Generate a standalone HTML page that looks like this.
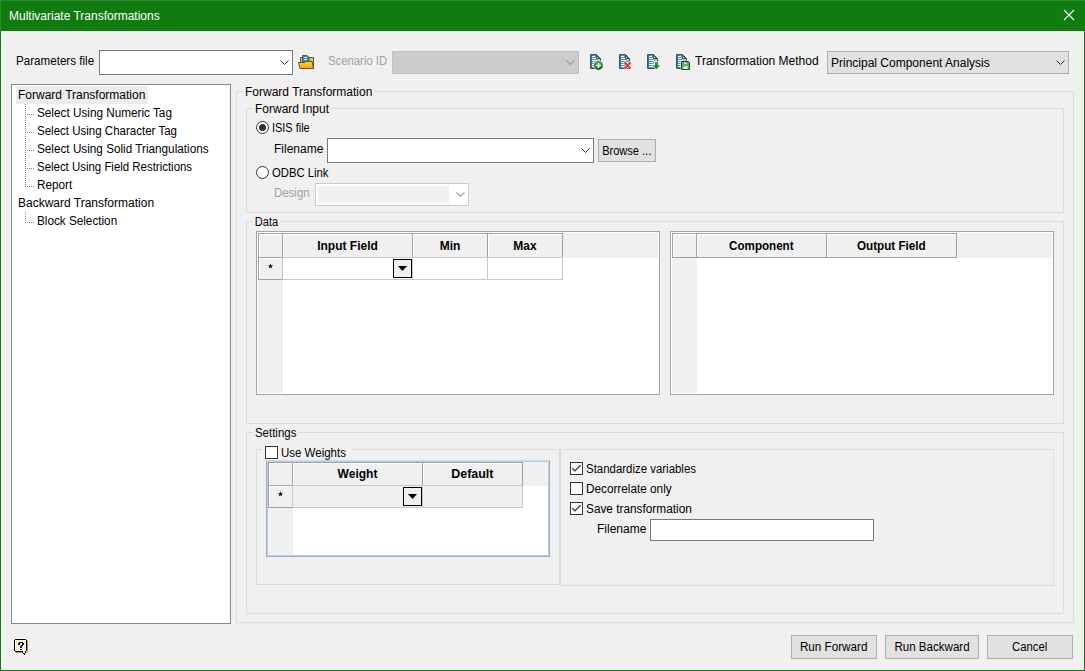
<!DOCTYPE html>
<html><head><meta charset="utf-8">
<style>
*{box-sizing:border-box}
html,body{margin:0;padding:0}
body{width:1085px;height:671px;overflow:hidden;position:relative;background:#107c10;font-family:"Liberation Sans",sans-serif;font-size:12px;color:#000}
.a{position:absolute}
.t{position:absolute;line-height:16px;white-space:nowrap}
.client{position:absolute;left:1px;top:31px;width:1083px;height:639px;background:#f0f0f0}
.frame{position:absolute;border:1px solid #dcdcdc}
.lbl{position:absolute;line-height:16px;white-space:nowrap;background:#f0f0f0;padding:0 2px}
.combo{position:absolute;background:#fff;border:1px solid #7a7a7a}
.chev{position:absolute;width:9px;height:6px}
.btn{position:absolute;background:#e1e1e1;border:1px solid #adadad;text-align:center;line-height:20px}
.grid{position:absolute;background:#fff;border:1px solid #a3a5ad}
.hc{position:absolute;border:1px solid #a0a0a0;background:#f0f0f0;font-weight:bold;text-align:center;line-height:24px;box-shadow:inset 1px 1px 0 #fff}
.rc{position:absolute;border:1px solid #c8c8c8;background:#fff}
.cb{position:absolute;width:13px;height:13px;border:1px solid #333;background:#fff}
.dis{color:#a0a0a0}
</style></head><body>
<!-- title bar -->
<div class="t" style="left:9px;top:8px;color:#fff">Multivariate Transformations</div>
<svg class="a" style="left:1063px;top:9px" width="12" height="12" viewBox="0 0 12 12"><path d="M1 1L11 11M11 1L1 11" stroke="#fff" stroke-width="1.1"/></svg>
<div class="a" style="left:0;top:0;width:1085px;height:1px;background:#2e882e"></div>
<div class="a" style="left:0;top:0;width:1px;height:31px;background:#2e882e"></div>
<div class="client"></div>

<!-- top row -->
<div class="t" style="transform:scaleX(0.968);transform-origin:0 0;left:16px;top:53px">Parameters file</div>
<div class="combo" style="left:99px;top:50px;width:194px;height:25px"></div>
<svg class="chev" style="left:280px;top:60px" viewBox="0 0 9 6"><path d="M0.5 0.5L4.5 4.5L8.5 0.5" fill="none" stroke="#333" stroke-width="1"/></svg>

<!-- folder icon -->
<svg class="a" style="left:298px;top:55px" width="16" height="14" viewBox="0 0 16 14">
<path d="M2.5 13.5V2.5H4.5V13.5Z" fill="#f5c518" stroke="#555" stroke-width="1"/>
<path d="M4.5 0.5H9L11 2.5V7H4.5Z" fill="#2e8fd0" stroke="#555" stroke-width="1"/>
<path d="M6 2.5h3M6 4.5h3" stroke="#fff" stroke-width="1"/>
<path d="M11 2.5H15.5V13.5H11Z" fill="#f5c518" stroke="#555" stroke-width="1"/>
<defs><linearGradient id="fy" x1="0" x2="0" y1="0" y2="1"><stop offset="0" stop-color="#ffd82a"/><stop offset="1" stop-color="#ff9e0c"/></linearGradient></defs><path d="M0.5 7.5H7L8 6.5H14L15.5 13.5H2Z" fill="url(#fy)" stroke="#555" stroke-width="1"/>
</svg>

<div class="t dis" style="transform:scaleX(0.944);transform-origin:0 0;left:328px;top:53px">Scenario ID</div>
<div class="a" style="left:392px;top:51px;width:187px;height:23px;background:#cccccc;border:1px solid #bfbfbf"></div>
<svg class="chev" style="left:566px;top:60px" viewBox="0 0 9 6"><path d="M0.5 0.5L4.5 4.5L8.5 0.5" fill="none" stroke="#a0a0a0" stroke-width="1.1"/></svg>

<!-- doc icons -->
<svg class="a" style="left:589px;top:53px" width="22" height="18" viewBox="0 0 22 18">
<defs><linearGradient id="db" x1="0" x2="1" y1="0" y2="0"><stop offset="0" stop-color="#1672b0"/><stop offset="1" stop-color="#a6d3f0"/></linearGradient>
<linearGradient id="gc" x1="0" x2="0" y1="0" y2="1"><stop offset="0" stop-color="#48b04a"/><stop offset="1" stop-color="#0a5c1c"/></linearGradient>
<linearGradient id="ga" x1="0" x2="0" y1="0" y2="1"><stop offset="0" stop-color="#3caa3c"/><stop offset="1" stop-color="#0b6a1e"/></linearGradient></defs>
<path d="M1.5 1.5H7.5L11.5 5.5V15.5H1.5Z" fill="url(#db)" stroke="#505050" stroke-width="1"/>
<path d="M7.5 1.5V5.5H11.5Z" fill="#505050" stroke="#505050" stroke-width="1" stroke-linejoin="round"/>
<rect x="8" y="4" width="1" height="1" fill="#fff"/>
<path d="M3 3.5h3M3 5.5h4M3 7.5h5M3 9.5h4M3 11.5h4M3 13.5h4" stroke="#fff" stroke-width="1"/>
<circle cx="9.5" cy="12.4" r="5.2" fill="#fff" opacity=".7"/>
<circle cx="9.5" cy="12.4" r="4.5" fill="url(#gc)"/>
<path d="M7 12.4h5M9.5 9.9v5" stroke="#fff" stroke-width="1.5"/>
</svg>
<svg class="a" style="left:618px;top:53px" width="22" height="18" viewBox="0 0 22 18">
<path d="M1.5 1.5H7.5L11.5 5.5V15.5H1.5Z" fill="url(#db)" stroke="#505050" stroke-width="1"/>
<path d="M7.5 1.5V5.5H11.5Z" fill="#505050" stroke="#505050" stroke-width="1" stroke-linejoin="round"/>
<rect x="8" y="4" width="1" height="1" fill="#fff"/>
<path d="M3 3.5h3M3 5.5h4M3 7.5h5M3 9.5h4M3 11.5h3M3 13.5h3" stroke="#fff" stroke-width="1"/>
<path d="M6.3 9.3L12.7 15.7M12.7 9.3L6.3 15.7" stroke="#fff" stroke-width="3.2" opacity=".8"/>
<path d="M6.5 9.5L12.5 15.5M12.5 9.5L6.5 15.5" stroke="#dc3b26" stroke-width="2"/>
</svg>
<svg class="a" style="left:646px;top:53px" width="22" height="18" viewBox="0 0 22 18">
<path d="M1.5 1.5H7.5L11.5 5.5V15.5H1.5Z" fill="url(#db)" stroke="#505050" stroke-width="1"/>
<path d="M7.5 1.5V5.5H11.5Z" fill="#505050" stroke="#505050" stroke-width="1" stroke-linejoin="round"/>
<rect x="8" y="4" width="1" height="1" fill="#fff"/>
<path d="M3 3.5h3M3 5.5h4M3 7.5h5M3 9.5h4M3 11.5h4M3 13.5h4" stroke="#fff" stroke-width="1"/>
<path d="M8 8H13V11.3H15.4L10.5 17L5.6 11.3H8Z" fill="#fff" opacity=".85"/>
<path d="M9 9H12V12.3H14L10.5 16L7 12.3H9Z" fill="url(#ga)"/>
</svg>
<svg class="a" style="left:675px;top:53px" width="22" height="18" viewBox="0 0 22 18">
<path d="M1.5 1.5H7.5L11.5 5.5V15.5H1.5Z" fill="url(#db)" stroke="#505050" stroke-width="1"/>
<path d="M7.5 1.5V5.5H11.5Z" fill="#505050" stroke="#505050" stroke-width="1" stroke-linejoin="round"/>
<rect x="8" y="4" width="1" height="1" fill="#fff"/>
<path d="M3 3.5h3M3 5.5h4M3 7.5h5M3 9.5h3M3 11.5h3M3 13.5h3" stroke="#fff" stroke-width="1"/>
<path d="M5.5 7.5H14L15.5 9V17.5H5.5Z" fill="#fff" opacity=".7"/>
<path d="M6.5 8.5H13.5L14.5 9.5V16.5H6.5Z" fill="#58b658" stroke="#0c5418" stroke-width="1"/>
<rect x="8" y="9" width="5" height="2.6" fill="#8a8a8a"/>
<rect x="9" y="9.5" width="3" height="1.6" fill="#d8d8d8"/>
<rect x="8.5" y="13.5" width="4" height="2.5" fill="#fff"/>
</svg>

<div class="t" style="left:695px;top:53px">Transformation Method</div>
<div class="a" style="left:827px;top:51px;width:242px;height:23px;background:#e1e1e1;border:1px solid #adadad"></div>
<div class="t" style="left:831px;top:55px">Principal Component Analysis</div>
<svg class="chev" style="left:1056px;top:60px" viewBox="0 0 9 6"><path d="M0.5 0.5L4.5 4.5L8.5 0.5" fill="none" stroke="#333" stroke-width="1"/></svg>

<!-- tree -->
<div class="a" style="left:11px;top:84px;width:220px;height:540px;background:#fff;border:1px solid #828790"></div>
<div class="a" style="left:16px;top:86px;width:132px;height:18px;background:#ececec"></div>
<div class="t" style="left:18px;top:87px">Forward Transformation</div>
<div class="t" style="transform:scaleX(0.979);transform-origin:0 0;left:37px;top:105px">Select Using Numeric Tag</div>
<div class="t" style="transform:scaleX(0.96);transform-origin:0 0;left:37px;top:123px">Select Using Character Tag</div>
<div class="t" style="transform:scaleX(0.978);transform-origin:0 0;left:37px;top:141px">Select Using Solid Triangulations</div>
<div class="t" style="transform:scaleX(0.953);transform-origin:0 0;left:37px;top:159px">Select Using Field Restrictions</div>
<div class="t" style="transform:scaleX(0.98);transform-origin:0 0;left:37px;top:177px">Report</div>
<div class="t" style="left:18px;top:195px">Backward Transformation</div>
<div class="t" style="transform:scaleX(0.977);transform-origin:0 0;left:37px;top:213px">Block Selection</div>
<svg class="a" style="left:0;top:0" width="40" height="240">
<g stroke="#808080" stroke-width="1" stroke-dasharray="1 1">
<path d="M25.5 104V187"/>
<path d="M27 114.5H35M27 132.5H35M27 150.5H35M27 168.5H35M27 186.5H35"/>
<path d="M25.5 212V223"/>
<path d="M27 222.5H35"/>
</g>
</svg>

<!-- outer frame -->
<div class="frame" style="left:236px;top:91px;width:838px;height:532px"></div>
<div class="lbl" style="left:243px;top:84px">Forward Transformation</div>

<div class="frame" style="left:246px;top:108px;width:818px;height:105px"></div>
<div class="lbl" style="left:253px;top:101px">Forward Input</div>

<svg class="a" style="left:256px;top:121px" width="13" height="13" viewBox="0 0 13 13"><circle cx="6.5" cy="6.5" r="6" fill="#fff" stroke="#333" stroke-width="1"/><circle cx="6.5" cy="6.5" r="3.5" fill="#333"/></svg>
<div class="t" style="transform:scaleX(0.91);transform-origin:0 0;left:272px;top:120px">ISIS file</div>
<div class="t" style="left:274px;top:141px">Filename</div>
<div class="combo" style="left:327px;top:138px;width:267px;height:25px"></div>
<svg class="chev" style="left:581px;top:148px" viewBox="0 0 9 6"><path d="M0.5 0.5L4.5 4.5L8.5 0.5" fill="none" stroke="#333" stroke-width="1"/></svg>
<div class="btn" style="left:598px;top:139px;width:58px;height:23px;line-height:22px"><span style="display:inline-block;transform:scaleX(0.92)">Browse ...</span></div>
<svg class="a" style="left:256px;top:166px" width="13" height="13" viewBox="0 0 13 13"><circle cx="6.5" cy="6.5" r="6" fill="#fff" stroke="#333" stroke-width="1"/></svg>
<div class="t" style="transform:scaleX(0.94);transform-origin:0 0;left:272px;top:165px">ODBC Link</div>
<div class="t dis" style="transform:scaleX(0.953);transform-origin:0 0;left:274px;top:185px">Design</div>
<div class="a" style="left:315px;top:183px;width:154px;height:23px;border:1px solid #cccccc;background:#fff"></div>
<div class="a" style="left:318px;top:186px;width:131px;height:17px;background:#f0f0f0"></div>
<svg class="chev" style="left:456px;top:192px" viewBox="0 0 9 6"><path d="M0.5 0.5L4.5 4.5L8.5 0.5" fill="none" stroke="#a0a0a0" stroke-width="1.1"/></svg>

<!-- data frame -->
<div class="frame" style="left:246px;top:221px;width:818px;height:203px"></div>
<div class="lbl" style="transform:scaleX(0.92);transform-origin:0 0;left:253px;top:214px">Data</div>

<div class="grid" style="left:256px;top:231px;width:404px;height:164px"></div>
<div class="a" style="left:258px;top:233px;width:400px;height:25px;background:#f0f0f0"></div>
<div class="a" style="left:258px;top:233px;width:25px;height:160px;background:#f0f0f0"></div>
<div class="hc" style="left:258px;top:233px;width:25px;height:25px"></div>
<div class="hc" style="left:282px;top:233px;width:131px;height:25px">Input Field</div>
<div class="hc" style="left:412px;top:233px;width:76px;height:25px">Min</div>
<div class="hc" style="left:487px;top:233px;width:76px;height:25px">Max</div>
<div class="rc" style="left:258px;top:257px;width:25px;height:23px;background:#f0f0f0;text-align:center;line-height:22px;border-color:#a0a0a0;box-shadow:inset 1px 1px 0 #fff"><svg width="24" height="21" style="position:absolute;left:0;top:0"><polygon points="11.50,5.50 12.18,7.27 14.07,7.37 12.59,8.56 13.09,10.38 11.50,9.35 9.91,10.38 10.41,8.56 8.93,7.37 10.82,7.27" fill="#000"/></svg></div>
<div class="rc" style="left:282px;top:257px;width:131px;height:23px"></div>
<div class="rc" style="left:412px;top:257px;width:76px;height:23px"></div>
<div class="rc" style="left:487px;top:257px;width:76px;height:23px"></div>
<div class="a" style="left:393px;top:259px;width:19px;height:19px;border:1px solid #000;background:#f0f0f0"></div>
<svg class="a" style="left:398px;top:266px" width="9" height="5"><path d="M0 0H9L4.5 5Z" fill="#000"/></svg>

<div class="grid" style="left:670px;top:231px;width:384px;height:164px"></div>
<div class="a" style="left:672px;top:233px;width:380px;height:25px;background:#f0f0f0"></div>
<div class="a" style="left:672px;top:233px;width:25px;height:160px;background:#f0f0f0"></div>
<div class="hc" style="left:672px;top:233px;width:25px;height:25px"></div>
<div class="hc" style="left:696px;top:233px;width:131px;height:25px"><span style="display:inline-block;transform:scaleX(0.967)">Component</span></div>
<div class="hc" style="left:826px;top:233px;width:131px;height:25px"><span style="display:inline-block;transform:scaleX(0.974)">Output Field</span></div>

<!-- settings -->
<div class="frame" style="left:246px;top:432px;width:818px;height:182px"></div>
<div class="lbl" style="transform:scaleX(0.958);transform-origin:0 0;left:253px;top:425px">Settings</div>

<div class="frame" style="left:256px;top:449px;width:304px;height:136px"></div>
<div class="a" style="left:261px;top:444px;width:91px;height:14px;background:#f0f0f0"></div>
<div class="cb" style="left:265px;top:446px"></div>
<div class="t" style="transform:scaleX(0.957);transform-origin:0 0;left:281px;top:445px">Use Weights</div>

<div class="grid" style="left:266px;top:460px;width:284px;height:97px;border-color:#c6dcf3 #a5a9b4 #a5a9b4 #a5a9b4;box-shadow:inset 0 0 0 1px #b3d1f1"></div>
<div class="a" style="left:268px;top:462px;width:280px;height:24px;background:#f0f0f0"></div>
<div class="a" style="left:268px;top:462px;width:25px;height:93px;background:#f0f0f0"></div>
<div class="hc" style="left:268px;top:462px;width:25px;height:24px"></div>
<div class="hc" style="left:292px;top:462px;width:131px;height:24px;line-height:23px">Weight</div>
<div class="hc" style="left:422px;top:462px;width:101px;height:24px;line-height:23px"><span style="display:inline-block;transform:scaleX(1.038)">Default</span></div>
<div class="rc" style="left:268px;top:485px;width:25px;height:23px;background:#f0f0f0;text-align:center;line-height:22px;border-color:#a0a0a0;box-shadow:inset 1px 1px 0 #fff"><svg width="24" height="21" style="position:absolute;left:0;top:0"><polygon points="11.50,5.50 12.18,7.27 14.07,7.37 12.59,8.56 13.09,10.38 11.50,9.35 9.91,10.38 10.41,8.56 8.93,7.37 10.82,7.27" fill="#000"/></svg></div>
<div class="rc" style="left:292px;top:485px;width:131px;height:23px;background:#f0f0f0;border-color:#c8c8c8"></div>
<div class="rc" style="left:422px;top:485px;width:101px;height:23px;background:#f0f0f0;border-color:#c8c8c8"></div>
<div class="a" style="left:403px;top:487px;width:19px;height:19px;border:1px solid #000;background:#f0f0f0"></div>
<svg class="a" style="left:408px;top:494px" width="9" height="5"><path d="M0 0H9L4.5 5Z" fill="#000"/></svg>

<div class="frame" style="left:560px;top:449px;width:494px;height:137px"></div>
<div class="cb" style="left:570px;top:462px"><svg width="11" height="11" style="position:absolute;left:0;top:0"><path d="M1.3 5.2L3.9 7.9L9.6 2.2" fill="none" stroke="#333" stroke-width="1.3"/></svg></div>
<div class="t" style="transform:scaleX(0.953);transform-origin:0 0;left:586px;top:461px">Standardize variables</div>
<div class="cb" style="left:570px;top:482px"></div>
<div class="t" style="transform:scaleX(0.98);transform-origin:0 0;left:586px;top:481px">Decorrelate only</div>
<div class="cb" style="left:570px;top:502px"><svg width="11" height="11" style="position:absolute;left:0;top:0"><path d="M1.3 5.2L3.9 7.9L9.6 2.2" fill="none" stroke="#333" stroke-width="1.3"/></svg></div>
<div class="t" style="transform:scaleX(0.985);transform-origin:0 0;left:586px;top:501px">Save transformation</div>
<div class="t" style="left:597px;top:521px">Filename</div>
<div class="combo" style="left:650px;top:519px;width:224px;height:22px"></div>

<!-- help icon -->
<svg class="a" style="left:12px;top:636px" width="18" height="20" viewBox="0 0 18 20" shape-rendering="crispEdges"><rect x="2" y="2" width="13" height="1" fill="#fff" opacity="0.5"/><rect x="1" y="3" width="1" height="12" fill="#fff" opacity="0.5"/><rect x="15" y="5" width="1" height="11" fill="#444" opacity="0.55"/><rect x="4" y="16" width="6" height="1" fill="#444" opacity="0.55"/><rect x="14" y="16" width="1" height="1" fill="#444" opacity="0.4"/><rect x="3" y="4" width="11" height="11" fill="#fff"/><rect x="3" y="3" width="11" height="1" fill="#000"/><rect x="2" y="4" width="1" height="11" fill="#000"/><rect x="14" y="4" width="1" height="11" fill="#000"/><rect x="3" y="15" width="8" height="1" fill="#000"/><rect x="13" y="15" width="1" height="1" fill="#000"/><rect x="11" y="16" width="1" height="1" fill="#f0e800"/><rect x="10" y="16" width="1" height="1" fill="#000" opacity="0.8"/><rect x="11" y="17" width="1" height="1" fill="#000"/><rect x="12" y="16" width="1" height="1" fill="#fff"/><rect x="13" y="16" width="1" height="1" fill="#000"/><rect x="12" y="17" width="1" height="1" fill="#000"/><rect x="12" y="18" width="1" height="1" fill="#000"/><rect x="4" y="5" width="1" height="1" fill="#f5e600"/><rect x="4" y="7" width="1" height="1" fill="#f5e600"/><rect x="4" y="9" width="1" height="1" fill="#f5e600"/><rect x="4" y="11" width="1" height="1" fill="#f5e600"/><rect x="4" y="13" width="1" height="1" fill="#f5e600"/><rect x="6" y="4" width="1" height="1" fill="#f5e600"/><rect x="6" y="6" width="1" height="1" fill="#f5e600"/><rect x="6" y="8" width="1" height="1" fill="#f5e600"/><rect x="6" y="10" width="1" height="1" fill="#f5e600"/><rect x="6" y="12" width="1" height="1" fill="#f5e600"/><rect x="6" y="14" width="1" height="1" fill="#f5e600"/><rect x="8" y="5" width="1" height="1" fill="#f5e600"/><rect x="8" y="7" width="1" height="1" fill="#f5e600"/><rect x="8" y="9" width="1" height="1" fill="#f5e600"/><rect x="8" y="11" width="1" height="1" fill="#f5e600"/><rect x="8" y="13" width="1" height="1" fill="#f5e600"/><rect x="10" y="4" width="1" height="1" fill="#f5e600"/><rect x="10" y="6" width="1" height="1" fill="#f5e600"/><rect x="10" y="8" width="1" height="1" fill="#f5e600"/><rect x="10" y="10" width="1" height="1" fill="#f5e600"/><rect x="10" y="12" width="1" height="1" fill="#f5e600"/><rect x="10" y="14" width="1" height="1" fill="#f5e600"/><rect x="12" y="5" width="1" height="1" fill="#f5e600"/><rect x="12" y="7" width="1" height="1" fill="#f5e600"/><rect x="12" y="9" width="1" height="1" fill="#f5e600"/><rect x="12" y="11" width="1" height="1" fill="#f5e600"/><rect x="12" y="13" width="1" height="1" fill="#f5e600"/><rect x="7" y="6" width="4" height="1" fill="#000080"/><rect x="6" y="7" width="2" height="1" fill="#000080"/><rect x="10" y="7" width="2" height="1" fill="#000080"/><rect x="6" y="8" width="2" height="1" fill="#000080"/><rect x="10" y="8" width="2" height="1" fill="#000080"/><rect x="9" y="9" width="2" height="1" fill="#000080"/><rect x="8" y="10" width="2" height="1" fill="#000080"/><rect x="9" y="10" width="1" height="1" fill="#1030ff"/><rect x="8" y="11" width="2" height="1" fill="#000080"/><rect x="8" y="13" width="2" height="1" fill="#000080"/></svg>

<!-- buttons -->
<div class="btn" style="left:791px;top:635px;width:86px;height:24px;line-height:22px"><span style="display:inline-block;transform:scaleX(0.974)">Run Forward</span></div>
<div class="btn" style="left:885px;top:635px;width:94px;height:24px;line-height:22px"><span style="display:inline-block;transform:scaleX(0.964)">Run Backward</span></div>
<div class="btn" style="left:987px;top:635px;width:86px;height:24px;line-height:22px"><span style="display:inline-block;transform:scaleX(0.941)">Cancel</span></div>
</body></html>
